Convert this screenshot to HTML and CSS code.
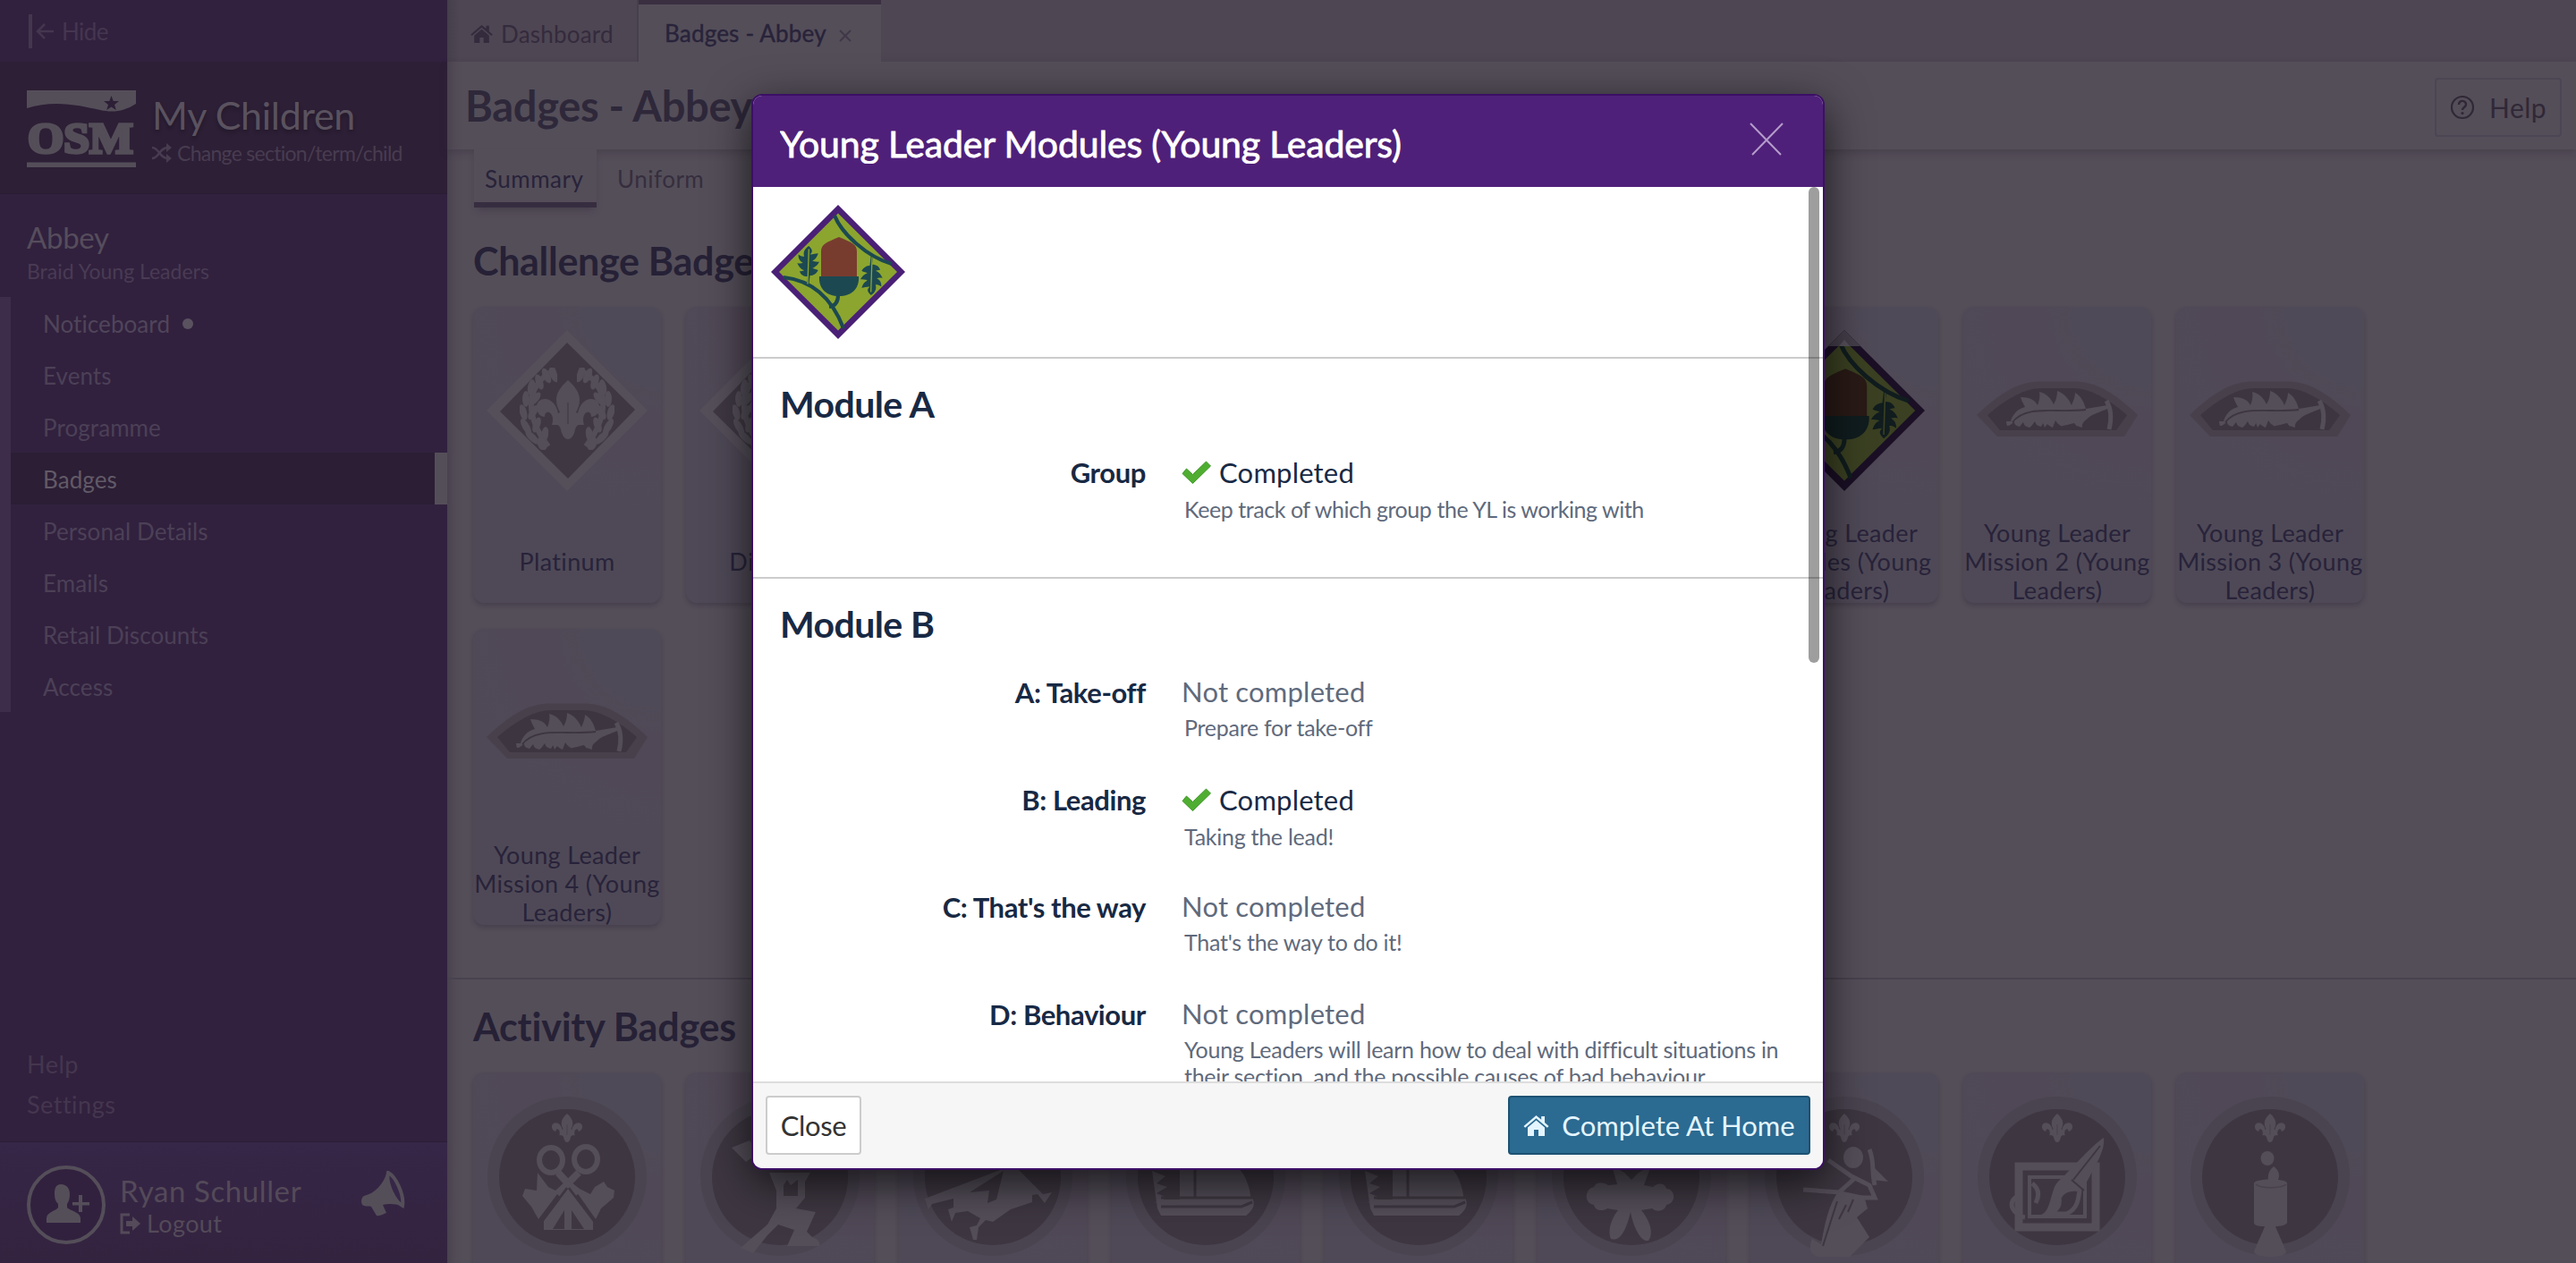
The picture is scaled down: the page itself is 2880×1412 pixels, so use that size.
FILE: index.html
```html
<!DOCTYPE html>
<html lang="en">
<head>
<meta charset="utf-8">
<title>Badges - Abbey</title>
<link rel="stylesheet" href="styles.css">
</head>
<body>
<svg class="sprite" aria-hidden="true">
  <symbol id="house" viewBox="0 0 28 24"><path d="M14 1 0 13l1.600 1.800L14 4.200l12.400 10.600L28 13l-4.500-3.900V2h-3.800v3.800z"/><path d="M14 6.500 4.500 14.600V24h7v-7h5v7h7v-9.400z"/></symbol>
  <symbol id="tick" viewBox="0 0 33 26"><path d="M1 14.500 5.500 9l7 6.500L27.500 1 32.500 6 12.500 25.500z" fill="#4fae32" stroke="#3f9628" stroke-width="1"/></symbol>
  <symbol id="fleur" viewBox="0 0 70 66"><path d="M35 0c8 7 13 14 13 22 0 6-2 10-4 14l2 1c2-10 8-16 15-16 6 0 10 5 9 11-1 5-4 9-9 9 0-4-2-6-5-5-4 2-5 8-3 14h-5c-3 0-4 2-5 5-1 6-4 11-8 11s-7-5-8-11c-1-3-2-5-5-5h-5c2-6 1-12-3-14-3-1-5 1-5 5-5 0-8-4-9-9-1-6 3-11 9-11 7 0 13 6 15 16l2-1c-2-4-4-8-4-14 0-8 5-15 13-22z"/><path d="M34.500 25h1v24h-1z" fill="#3e3742"/></symbol>
  <symbol id="leaf" viewBox="0 0 20 44" preserveAspectRatio="none"><path d="M11 0c4 4 3 6 1 8 3 0 5-1 7-1-1 4-3 6-5 7 2 1 4 1 6 1-2 4-4 5-6 6 2 1 4 1 5 2-2 4-5 5-7 5l-1 9H9l1-8c-4 0-6-2-7-5 2 0 4-1 4-1-3-1-5-4-6-7 2 1 4 0 5 0-3-2-4-4-4-8 2 2 4 2 5 2-1-4 0-7 4-10z"/><path d="M11 3 10 36" stroke="#8ca52f" stroke-width="1" fill="none"/></symbol>
  <symbol id="acorn-badge" viewBox="0 0 150 150">
    <path d="M75 0 150 75 75 150 0 75z" fill="#4a2076"/><path d="M75 9.500 141 75 75 140.500 9 75z" fill="#8ca52f"/>
    <g fill="none" stroke="#1c4951" stroke-width="4.200"><path d="M71 12c8 20 36 46 64 54M14 81c36 4 56 28 67 57M75 101c0 8-3 12-10 13"/></g>
    <path d="M56 80V52c0-8 6-10 20-16 14 6 20 8 20 16v28z" fill="#783c2f"/><path d="M54 80h44c1 14-8 22-22 22s-23-8-22-22z" fill="#1c4951"/>
    <g fill="#1c4951"><use href="#leaf" x="28" y="46" width="26" height="52"/><use href="#leaf" x="-126" y="-101" width="26" height="52" transform="rotate(180)"/></g>
  </symbol>
  <symbol id="laurel" viewBox="0 0 42 92"><path d="M40 2C12 16 0 46 32 88" fill="none" stroke="#544e59" stroke-width="6"/><g fill="#544e59"><ellipse cx="38" cy="8" rx="4" ry="9" transform="rotate(-25 38 8)"/><ellipse cx="30" cy="9" rx="4" ry="9" transform="rotate(-25 30 9)"/><ellipse cx="22" cy="16" rx="4" ry="9" transform="rotate(-20 22 16)"/><ellipse cx="13" cy="22" rx="4" ry="9" transform="rotate(10 13 22)"/><ellipse cx="7" cy="35" rx="4" ry="9"/><ellipse cx="17" cy="35" rx="4" ry="9" transform="rotate(40 17 35)"/><ellipse cx="4" cy="50" rx="4" ry="9" transform="rotate(-15 4 50)"/><ellipse cx="15" cy="50" rx="4" ry="9" transform="rotate(30 15 50)"/><ellipse cx="7" cy="66" rx="4" ry="10" transform="rotate(-30 7 66)"/><ellipse cx="19" cy="64" rx="4" ry="9" transform="rotate(20 19 64)"/><ellipse cx="14" cy="78" rx="4" ry="10" transform="rotate(-45 14 78)"/><ellipse cx="28" cy="75" rx="4" ry="9" transform="rotate(10 28 75)"/><ellipse cx="25" cy="85" rx="5" ry="8" transform="rotate(-20 25 85)"/></g></symbol>
  <symbol id="award" viewBox="0 0 180 180"><path d="M90 0 180 90 90 180 0 90z" fill="#554f5a"/><path d="M90 14 166 89 91 166 15 91z" fill="#3f3843"/><use href="#laurel" x="37" y="42" width="42" height="92"/><use href="#laurel" x="-143" y="42" width="42" height="92" transform="scale(-1 1)"/><use href="#fleur" x="56" y="56" width="70" height="66" fill="#544e59"/></symbol>
  <symbol id="mission" viewBox="0 0 180 180"><path d="M0 95C24 72 46 57.500 70 57.500h40C134 57.500 156 72 180 95l-15 24H23z" fill="#48414c"/><path d="M12 95C34 76 54 65 72 65h36c18 0 38 11 60 30l-12 17H26z" fill="#3d3641"/><path d="M38 102c2-8 8-14 16-16-2-4-4-7-5-11 10 0 16 3 19 9 2-5 3-10 2-15 9 2 13 8 16 14 3-5 4-10 4-15 8 3 13 9 16 16 2-5 4-9 4-14 7 4 10 11 12 18l24-4v4c-7 3-16 6-20 9-4 4-9 6-8 12-4-1-7-2-9-5-6 1-9 3-15 3-3-2-4-3-6-6l-3 8c-5-2-7-5-9-8l-4 7c-5-1-6-3-7-6-3 4-4 6-6 7-5-1-6-3-7-6l-4 5c-5-1-6-3-6-6-4 4-5 5-8 5 0 0-1-2-1-5z" fill="#544e59"/><path d="M54 98l2 10 8-10zM72 98l4 11 8-11zM90 98l5 10 8-10zM106 98l6 10 6-12z" fill="#544e59"/><path d="M40 103C55 83 88 93 122 89" fill="none" stroke="#3d3641" stroke-width="1.800"/><path d="M145 79c6 10 6 20 3 32" fill="none" stroke="#544e59" stroke-width="5"/></symbol>
  <symbol id="disc" viewBox="0 0 180 180"><circle cx="90" cy="90" r="89" fill="#4a4450"/><circle cx="90" cy="91" r="76" fill="#3e3742"/><use href="#fleur" x="73" y="20" width="34" height="32" fill="#544e59"/></symbol>
</svg>

<div class="app">
  <aside class="sidebar">
    <div class="hide"><svg width="34" height="40" viewBox="0 0 34 40" fill="none" stroke="currentColor" stroke-width="2.500"><path d="M2 1v38" stroke-width="4"/><path d="M28 20H11M18 12l-8 8 8 8"/></svg><span>Hide</span></div>
    <div class="brand">
      <svg width="122" height="87" viewBox="0 0 122 87" fill="#544e59"><path d="M0 0h122v15C108 24 96 25 82 22 60 17 30 10 0 20z"/><path d="M94.500 6l2.200 6h6.300l-5 4 1.800 6-5.300-3.600L89.200 22l1.800-6-5-4h6.300z" fill="#2d1f36"/><text class="logo-text" x="1" y="69.500" textLength="118" lengthAdjust="spacingAndGlyphs">OSM</text><path d="M0 80.500h122V86H0z"/></svg>
      <div class="brand-text"><div class="brand-name">My Children</div><div class="brand-change"><svg width="22" height="22" viewBox="0 0 22 22" fill="none" stroke="currentColor" stroke-width="2.500"><path d="M0 5c8 0 8 12 18 12M0 17c8 0 8-12 18-12"/><path d="M16 0l6 5-6 5zM16 12l6 5-6 5z" fill="currentColor" stroke="none"/></svg><span>Change section/term/child</span></div></div>
    </div>
    <div class="member"><div class="member-name">Abbey</div><div class="member-section">Braid Young Leaders</div></div>
    <nav class="menu">
      <a class="lit">Noticeboard<i class="dot"></i></a><a>Events</a><a>Programme</a><a class="active">Badges</a><a>Personal Details</a><a>Emails</a><a>Retail Discounts</a><a>Access</a>
    </nav>
    <div class="links"><a>Help</a><a>Settings</a></div>
    <div class="user">
      <svg width="88" height="88" viewBox="0 0 88 88"><circle cx="44" cy="44" r="42" fill="#31213e" stroke="#544e59" stroke-width="4"/><path d="M38 21c7 0 10 5 10 11 0 5-1 8-3 11v4c2 3 15 5 15 12v5H22v-5c0-7 12-9 13-12v-4c-3-3-4-6-4-11 0-6 1-11 7-11zM58 33h4v8h8v3.500h-8V52h-4v-7.500h-7V41h7z" fill="#544e59"/></svg>
      <div class="user-text"><div class="user-name">Ryan Schuller</div><div class="logout"><svg width="24" height="24" viewBox="0 0 24 24"><path d="M11 2H2v20h9" fill="none" stroke="currentColor" stroke-width="3"/><path d="M7 9h7V4l9 8-9 8v-5H7z" fill="currentColor"/></svg><span>Logout</span></div></div>
      <svg class="horn" width="49" height="51" viewBox="0 0 49 51"><path d="M29 1C24 16 15 25 3 28c-4 2-4 10 0 11 4 1 6 0 8 1l6 10c4 1 8-2 11-3l-4-9c8-2 14-1 21 1" fill="#544e59"/><path d="M30 2c8 4 18 24 16 37-8-4-19-24-16-37z" fill="#362647" stroke="#544e59" stroke-width="4"/></svg>
    </div>
  </aside>

  <main class="main">
    <div class="tabs">
      <div class="tab"><svg width="25" height="21"><use href="#house"/></svg><span>Dashboard</span></div>
      <div class="tab current"><span class="tab-title">Badges - Abbey</span><svg width="14" height="14" viewBox="0 0 14 14" stroke="#403848" stroke-width="2"><path d="M1 1l12 12M13 1L1 13"/></svg></div>
    </div>
    <header class="title-row"><h1>Badges - Abbey</h1><div class="help-btn"><svg width="28" height="28" viewBox="0 0 28 28"><circle cx="14" cy="14" r="12" fill="none" stroke="currentColor" stroke-width="2.200"/><path d="M10 11c0-6 8.500-5 8 0-.4 3-4 3-4 6" fill="none" stroke="currentColor" stroke-width="2.400"/><circle cx="14" cy="20.500" r="1.600" fill="currentColor"/></svg><span>Help</span></div></header>
    <div class="subtabs"><div class="subtab on">Summary</div><div class="subtab">Uniform</div></div>
    <h2 class="first">Challenge Badges</h2>
    <div class="grid">
      <div class="card"><div class="art"><svg><use href="#award"/></svg></div><div class="name">Platinum</div></div>
      <div class="card"><div class="art"><svg><use href="#award"/></svg></div><div class="name diamond">Diamond</div></div>
      <div class="card"></div><div class="card"></div><div class="card"></div><div class="card"></div>
      <div class="card"><div class="art"><svg viewBox="0 0 150 150"><g class="dimmed"><use href="#acorn-badge" width="150" height="150"/></g><path d="M75 0 90 15H60z" fill="#443e4a"/><path d="M75 9 80 15H70z" fill="#57515b"/></svg></div><div class="name">Young Leader Modules (Young Leaders)</div></div>
      <div class="card"><div class="art"><svg><use href="#mission"/></svg></div><div class="name">Young Leader Mission 2 (Young Leaders)</div></div>
      <div class="card"><div class="art"><svg><use href="#mission"/></svg></div><div class="name">Young Leader Mission 3 (Young Leaders)</div></div>
      <div class="card"><div class="art"><svg><use href="#mission"/></svg></div><div class="name">Young Leader Mission 4 (Young Leaders)</div></div>
    </div>
    <hr>
    <h2>Activity Badges</h2>
    <div class="grid">
      <div class="card"><div class="art"><svg viewBox="0 0 180 180"><use href="#disc"/><g fill="none" stroke="#544e59" stroke-width="6"><ellipse cx="72" cy="72" rx="13" ry="14"/><ellipse cx="111" cy="71" rx="13" ry="14"/><path d="M80 86l22 24M103 86l-24 24" stroke-width="8"/></g><path d="M91 94 122 138l6-12 14-12 1-8-8-4-4-6-10 6-5 8-12-6zM91 94 58 138l-8-14-10-12 3-8 13 2 1-20 12 16 8 4z" fill="#544e59"/><path d="M91 104 119 140v10H64v-10z" fill="#544e59"/><path d="M90 103 62 140M92 103l28 37" stroke="#3e3742" stroke-width="2.500"/><path d="M87 128v21H74zM95 128v21h14z" fill="#3e3742"/></svg></div></div>
      <div class="card"><div class="art"><svg viewBox="0 0 180 180"><use href="#disc"/><path d="M78 86h46l-6 10v18l-10 12 22 4-10 22 6 6c6 2 10 6 8 10H98l8-18-18-6-12 12-16 20-14-6 30-26 10-18v-20z" fill="#544e59"/><path d="M36 58l20-8 10 14-14 10z" fill="#544e59"/><path d="M94 100l4-6 4 6 8-6v18H94z" fill="#3e3742"/></svg></div></div>
      <div class="card"><div class="art"><svg viewBox="0 0 180 180"><use href="#disc"/><path d="M106 80l12 2 28 28 10-2-8 12-8-10-6 1v8l-24 8-20 14-8-2-8 8-2 14h-4l-4-14 8-2 4-8-14-8-14 2-4 10-4-14 6-2v-10l-24 6-4 6-4-12z" fill="#544e59"/><path d="M102 84 94 116l-10 4 2-14-22 2z" fill="#3e3742"/></svg></div></div>
      <div class="card"><div class="art"><svg viewBox="0 0 180 180"><use href="#disc"/><path d="M30 84l15 6-10 8 12 4-12 7 12 5-14 6 4-4h24V80h64c10 8 14 18 18 36 3 8-3 14-8 18H40l-4-8z" fill="#544e59"/><path d="M78 78v36M128 80c8 8 12 20 14 34H40M40 124l90 0 12-5" fill="none" stroke="#3e3742" stroke-width="3"/></svg></div></div>
      <div class="card"><div class="art"><svg viewBox="0 0 180 180"><use href="#disc"/><path d="M30 84l15 6-10 8 12 4-12 7 12 5-14 6 4-4h24V80h64c10 8 14 18 18 36 3 8-3 14-8 18H40l-4-8z" fill="#544e59"/><path d="M78 78v36M128 80c8 8 12 20 14 34H40M40 124l90 0 12-5" fill="none" stroke="#3e3742" stroke-width="3"/></svg></div></div>
      <div class="card"><div class="art"><svg viewBox="0 0 180 180"><use href="#disc"/><path d="M68 78l14 8 8 8 8-8 14-8-8 22 10 2c6-6 14-4 15 2 10 0 12 16 0 18-2 8-12 8-16 4l-12 2c10 12 14 26 8 34-10 2-18-20-20-32-4 16-10 34-22 30-4-8 0-22 8-32l-12-2c-6 4-14 2-15-4-12-2-10-18 0-20 2-6 10-6 16-2l10-1z" fill="#544e59"/></svg></div></div>
      <div class="card"><div class="art"><svg viewBox="0 0 180 180"><use href="#disc"/><ellipse cx="100" cy="69" rx="11" ry="12" fill="#544e59"/><path d="M72 72l26 18 20 10 6 14-16 0M44 105l40 3 18-16M118 60c6 14 2 24 6 40" fill="none" stroke="#544e59" stroke-width="5"/><path d="M121 78l18 18-18-2zM84 106l28 6 4 14-12 10 14 22-28 28-30-6c-8-2-10-12-6-20l10 6c4-22 8-44 20-60z" fill="#544e59"/><path d="M82 118l-16 50M92 122l-8 16M100 116l-6 14" stroke="#3e3742" stroke-width="2"/></svg></div></div>
      <div class="card"><div class="art"><svg viewBox="0 0 180 180"><use href="#disc"/><path d="M47 79h86v68H47z" fill="none" stroke="#544e59" stroke-width="9"/><path d="M59 91h62v44H59z" fill="none" stroke="#544e59" stroke-width="4"/><path d="M62 98c8 6 8 14 4 22M46 112c-14 8-4 22 8 24M90 104c6 20 0 24-10 28h20c16-6 14-24 16-36" fill="none" stroke="#544e59" stroke-width="5"/><path d="M142 47c2 16-12 34-22 56l-8 4c-14-2-20 8-20 18-4 12-14 14-20 8 12-4 10-30 20-38C110 78 128 56 142 47z" fill="#544e59"/><path d="M138 56 108 94M106 94l14 12" stroke="#3e3742" stroke-width="2"/></svg></div></div>
      <div class="card"><div class="art"><svg viewBox="0 0 180 180"><use href="#disc"/><g fill="#544e59"><ellipse cx="87" cy="70" rx="7.500" ry="8"/><path d="M94 79c8 6 6 12 5 15H88c-1-6 1-11 6-15zM72 98c0-6 37-6 37 0v44c-2 4-12 4-13 4 2 6 8 18 12 28 2 8-36 8-36 0 4-10 10-22 12-28-4 0-12 0-12-4z"/></g><path d="M74 99c6 5 28 5 34 0" fill="none" stroke="#48414c" stroke-width="1.500"/></svg></div></div>
    </div>
  </main>
</div>

<section class="modal">
  <header class="modal-head"><div class="modal-title">Young Leader Modules (Young Leaders)</div><svg width="38" height="37" viewBox="0 0 38 37" stroke="#b49ccb" stroke-width="2"><path d="M1 1l34 35M37 1L3 36"/></svg></header>
  <div class="modal-body">
    <div class="badge-row"><svg width="150" height="150"><use href="#acorn-badge"/></svg></div>
    <div class="module first-module"><h3>Module A</h3>
      <div class="req"><div class="label">Group</div><div class="value"><div class="status done"><svg width="33" height="26"><use href="#tick"/></svg><span>Completed</span></div><p class="tight">Keep track of which group the YL is working with</p></div></div>
    </div>
    <div class="module"><h3>Module B</h3>
      <div class="req"><div class="label">A: Take-off</div><div class="value"><div class="status">Not completed</div><p>Prepare for take-off</p></div></div>
      <div class="req"><div class="label">B: Leading</div><div class="value"><div class="status done"><svg width="33" height="26"><use href="#tick"/></svg><span>Completed</span></div><p>Taking the lead!</p></div></div>
      <div class="req"><div class="label">C: That's the way</div><div class="value"><div class="status">Not completed</div><p>That's the way to do it!</p></div></div>
      <div class="req"><div class="label">D: Behaviour</div><div class="value"><div class="status">Not completed</div><p>Young Leaders will learn how to deal with difficult situations in<br>their section, and the possible causes of bad behaviour.</p></div></div>
    </div>
    <div class="scrollbar"></div>
  </div>
  <footer class="modal-foot"><div class="btn">Close</div><div class="btn primary"><svg width="29" height="24"><use href="#house"/></svg><span>Complete At Home</span></div></footer>
</section>
</body>
</html>
```
FILE: styles.css
```css
* { box-sizing: border-box; }
html { overflow: hidden; }
body { margin: 0; width: 2880px; height: 1412px; overflow: hidden; position: relative; background: #544e59; font-family: Lato, "Liberation Sans", sans-serif; font-size: 26px; color: #28233a; white-space: nowrap; }
h1, h2, h3, p { margin: 0; }
.sprite { position: absolute; width: 0; height: 0; }
.app { display: flex; height: 1412px; overflow: hidden; }

/* Sidebar */
.sidebar { width: 500px; display: flex; flex-direction: column; background: #31213e; color: #4c4057; }
.hide { height: 69px; display: flex; align-items: center; gap: 3px; padding: 1px 0 0 32px; color: #453650; letter-spacing: -.6px; }
.brand { height: 148px; display: flex; padding: 32px 0 0 30px; gap: 18px; background: #2d1f36; border-bottom: 1px solid #2a1c33; }
.logo-text { font: 900 49px "Liberation Serif", serif; stroke: #544e59; stroke-width: 3.500px; }
.brand-text { padding-top: 2px; }
.brand-name { font-size: 43px; line-height: 52px; letter-spacing: -.3px; color: #5a525f; text-shadow: 0 3px 4px rgba(0,0,0,.25); }
.brand-change { display: flex; align-items: center; gap: 6px; font-size: 23px; line-height: 32px; letter-spacing: -.72px; color: #483c50; }
.member { padding: 28px 0 11px 30px; }
.member-name { font-size: 33px; line-height: 40px; letter-spacing: -.3px; color: #564d5c; }
.member-section { font-size: 23px; line-height: 36px; color: #493b54; }
.menu { border-left: 12px solid #3d2d4a; }
.menu a { height: 58px; display: flex; align-items: center; padding: 2px 0 0 36px; letter-spacing: .08px; }
.menu .lit { color: #50455a; }
.menu .active { background: #2b1e35; border-right: 14px solid #544e59; color: #625a67; }
.dot { width: 12px; height: 12px; border-radius: 50%; background: #5a525f; margin-left: 14px; }
.links { margin-top: auto; padding: 0 0 19px 30px; font-size: 27px; line-height: 45px; letter-spacing: .5px; color: #45364f; }
.links a { display: block; }
.user { height: 136px; display: flex; padding: 26px 47px 0 30px; border-top: 1px solid #2b1d36; background: linear-gradient(#362647, #33233f); color: #544a59; }
.user-text { padding: 8px 0 0 16px; }
.user-name { font-size: 33px; line-height: 40px; letter-spacing: .6px; }
.logout { display: flex; align-items: center; gap: 6px; font-size: 27px; line-height: 33px; letter-spacing: .4px; }
.horn { margin: 6px 0 0 auto; }

/* Page behind the dialog */
.main { flex: 1; box-shadow: inset 14px 0 14px -12px rgba(40,30,45,.35); }
.tabs { height: 69px; display: flex; background: linear-gradient(90deg, #453e4b, #4e4653 14px); }
.tab { width: 214px; display: flex; align-items: center; gap: 9px; padding: 6px 0 0 26px; letter-spacing: .2px; color: #342b3d; border-right: 2px solid #463f4c; }
.tab svg { fill: currentColor; }
.tab.current { width: 271px; padding: 0 0 0 29px; gap: 14px; border-top: 5px solid #3a2f41; border-right: 0; background: #544e59; color: #28233a; }
.tab-title { letter-spacing: .2px; -webkit-text-stroke: .4px; }
.tab.current svg { margin-top: 6px; }
.title-row { height: 98px; display: flex; justify-content: space-between; align-items: center; padding: 0 16px 0 20px; box-shadow: 0 4px 8px rgba(50,40,55,.3); }
h1 { font-size: 47px; line-height: 54px; padding-bottom: 1px; letter-spacing: -.3px; color: #2e283a; }
.help-btn { width: 142px; height: 66px; margin-top: 3px; display: flex; align-items: center; gap: 16px; padding-left: 15px; border: 2px solid #4b4554; border-radius: 4px; font-size: 30px; letter-spacing: .5px; color: #302836; }
.subtabs { height: 70px; display: flex; padding-left: 30px; }
.subtab { height: 65px; line-height: 66px; letter-spacing: .5px; padding-left: 23px; color: #362e3e; }
.subtab.on { width: 137px; padding-left: 12px; border-bottom: 6px solid #372d40; color: #28233a; background: #544e59; box-shadow: 0 5px 8px -3px rgba(40,30,45,.35); z-index: 1; }
h2 { font-size: 43px; line-height: 50px; letter-spacing: -.2px; padding-left: 29px; color: #262136; margin: 28px 0 26px; }
h2.first { margin: 30px 0 26px; letter-spacing: -.3px; }
hr { border: 0; height: 2px; background: #48424f; margin: 59px 0 0; }
.grid { display: grid; grid-template-columns: repeat(9, 210px); grid-auto-rows: 331px; gap: 29px 28px; padding-left: 29px; }
.card { border-radius: 12px; background: #4f4957; box-shadow: 0 3px 5px rgba(40,32,50,.3); display: flex; flex-direction: column; }
.art { height: 230px; padding: 26px 15px 0; border-radius: 12px 12px 0 0; background: radial-gradient(circle at 100% 0, #4f4a57 85px, #504856 120px, #504856 170px, #4f4957 230px); }
.art svg { display: block; width: 180px; height: 180px; }
.dimmed { filter: brightness(.4) saturate(.65); }
.name { height: 101px; padding-top: 8px; display: flex; align-items: center; justify-content: center; text-align: center; font-size: 27px; line-height: 32px; letter-spacing: .35px; white-space: normal; }
.name.diamond { letter-spacing: .8px; }

/* Dialog */
.modal { position: absolute; left: 840px; top: 105px; width: 1200px; height: 1203px; display: flex; flex-direction: column; border: 2px solid #3c0f66; border-radius: 12px; background: #f6f6f6; box-shadow: 0 14px 50px rgba(0,0,0,.7); color: #182944; overflow: hidden; }
.modal-head { height: 102px; display: flex; justify-content: space-between; padding: 30px 44px 0 30px; background: #4f2079; }
.modal-title { height: 46px; overflow: hidden; font-size: 41px; line-height: 47px; letter-spacing: -.16px; color: #fff; -webkit-text-stroke: .8px; }
.modal-body { flex: 1; position: relative; overflow: hidden; background: #fff; }
.badge-row { height: 190px; padding: 20px; }
.module { border-top: 2px solid #ccc; padding-top: 26px; }
.first-module { height: 246px; }
h3 { font-size: 41px; line-height: 50px; letter-spacing: -.59px; padding-left: 30px; margin-bottom: 30px; }
.req { height: 120px; display: grid; grid-template-columns: 439px 1fr; column-gap: 40px; }
.label { padding-top: 1px; text-align: right; font-size: 31px; line-height: 40px; font-weight: 700; letter-spacing: -.4px; }
.status { font-size: 31px; line-height: 40px; letter-spacing: .2px; color: #5f6a7c; }
.status.done { display: flex; align-items: flex-start; gap: 9px; padding: 1px 0; color: #182944; }
.status.done svg { margin-top: 7px; }
.value p { padding-left: 3px; margin-top: 5px; font-size: 25px; line-height: 30px; letter-spacing: -.27px; color: #5f6a7c; }
.value .tight { letter-spacing: -.44px; }
.scrollbar { position: absolute; right: 4px; top: 0; width: 12px; height: 532px; border-radius: 6px; background: rgba(0,0,0,.38); }
.modal-foot { height: 97px; display: flex; justify-content: space-between; align-items: flex-start; padding: 14px 14px 0; border-top: 2px solid #ddd; background: #f6f6f6; }
.btn { height: 66px; width: 107px; display: flex; align-items: center; justify-content: center; border: 2px solid #ccc; border-radius: 4px; background: #fff; font-size: 31px; letter-spacing: -.4px; color: #333; }
.btn.primary { width: 338px; gap: 14px; background: #2b6a91; border-color: #1d5272; color: #e4f5ff; letter-spacing: 0; }
.btn svg { fill: #e4f5ff; }
```
